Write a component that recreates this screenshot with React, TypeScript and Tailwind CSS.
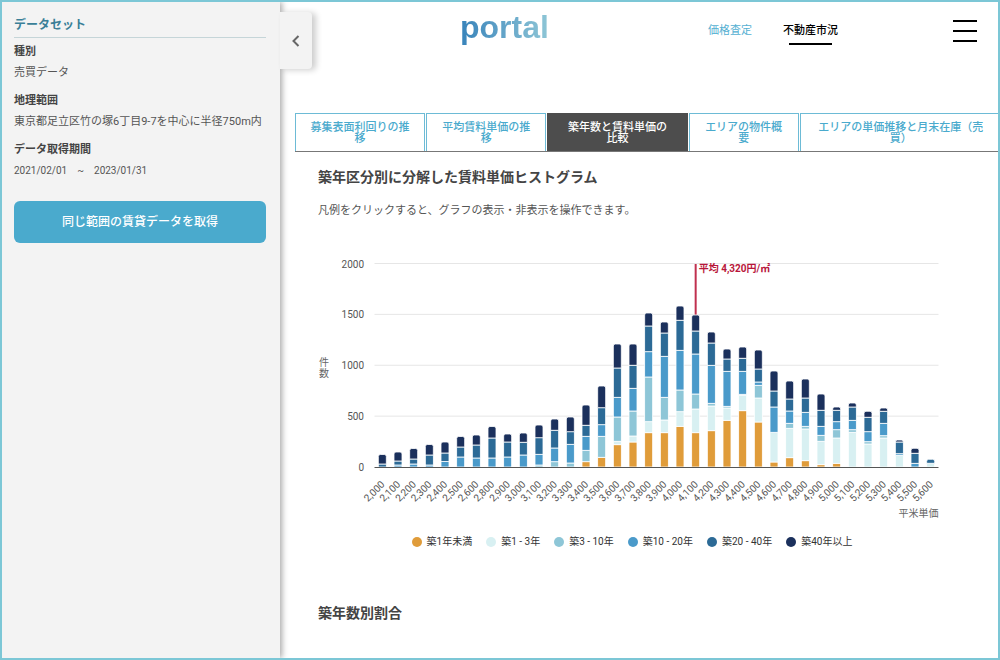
import { useState } from "react";

type Series = { name: string; color: string };

const SERIES: Series[] = [
  { name: "築1年未満", color: "#e09c3a" },
  { name: "築1 - 3年", color: "#d8f0f2" },
  { name: "築3 - 10年", color: "#8ec6d7" },
  { name: "築10 - 20年", color: "#4a9aca" },
  { name: "築20 - 40年", color: "#2c6a96" },
  { name: "築40年以上", color: "#1b305c" },
];

// Unit price and the cumulative top of each age band, in chart units above the baseline.
const BARS: [string, number[]][] = [
  ["2,000", [0, 0, 0, 0, 3, 12.5]],
  ["2,100", [0, 0, 0, 2, 6, 15]],
  ["2,200", [0, 0, 0, 3, 8, 18.5]],
  ["2,300", [0, 0, 0, 2, 12, 22.5]],
  ["2,400", [0, 0, 0, 5.5, 14, 25]],
  ["2,500", [0, 0, 0, 10, 20, 30.5]],
  ["2,600", [0, 0, 0, 9, 22, 32]],
  ["2,800", [0, 0, 0, 9, 29, 40.5]],
  ["2,900", [0, 0, 0, 10, 25, 33]],
  ["3,000", [0, 0, 0, 12, 24.7, 34]],
  ["3,100", [0, 0, 2, 12.7, 29.3, 42]],
  ["3,200", [0, 0, 5.3, 19, 36.7, 48]],
  ["3,300", [0, 0, 4, 22.7, 35.3, 50]],
  ["3,400", [5.3, 5.3, 16.7, 30.7, 41.7, 62]],
  ["3,500", [9.7, 9.7, 30.7, 42.3, 59.3, 81]],
  ["3,600", [22.3, 25.7, 50, 69.7, 99, 123]],
  ["3,700", [25, 31, 56, 78.7, 101.7, 123]],
  ["3,800", [34.3, 45.3, 90, 115.3, 141, 154]],
  ["3,900", [34.3, 47, 69.7, 110.7, 134, 145]],
  ["4,000", [40.7, 55.3, 77, 116.7, 146.7, 161]],
  ["4,100", [34.3, 58, 73, 113, 136, 152]],
  ["4,200", [36.3, 61, 63.7, 101.7, 124, 135]],
  ["4,300", [46.7, 59, 60.7, 95.7, 108, 118]],
  ["4,400", [56.3, 71.7, 72.7, 95.7, 108.7, 120]],
  ["4,500", [45, 69, 81.7, 85, 98, 117]],
  ["4,600", [5, 34.7, 34.7, 60, 76, 96]],
  ["4,700", [9.3, 38.7, 43.7, 56, 68, 86]],
  ["4,800", [6.3, 38, 40.7, 54.7, 69, 88]],
  ["4,900", [2.3, 25.7, 31.7, 40.7, 56.7, 73]],
  ["5,000", [3.7, 29, 37.3, 45.3, 56.7, 60]],
  ["5,100", [0, 34.7, 37.3, 46.7, 60, 64]],
  ["5,200", [0, 23, 25.3, 35.3, 49.7, 55.7]],
  ["5,300", [0, 29, 31.3, 43.7, 55.7, 59]],
  ["5,400", [0, 11.7, 11.7, 13.3, 25, 27]],
  ["5,500", [0, 0, 0, 3.7, 13.7, 18.7]],
  ["5,600", [0, 3.7, 3.7, 3.7, 7.7, 7.7]],
];

const TABS: string[][] = [
  ["募集表面利回りの推", "移"],
  ["平均賃料単価の推", "移"],
  ["築年数と賃料単価の", "比較"],
  ["エリアの物件概", "要"],
  ["エリアの単価推移と月末在庫（売", "買）"],
];

const CONDITIONS: [string, string][] = [
  ["種別", "売買データ"],
  ["地理範囲", "東京都足立区竹の塚6丁目9-7を中心に半径750m内"],
  ["データ取得期間", "2021/02/01　~　2023/01/31"],
];

const BASE = 211;
const LEFT = 56.5;
const RIGHT = 620.5;
const STEP = (RIGHT - LEFT) / BARS.length;
const AVERAGE_X = LEFT + STEP * 20.5;

function topRounded(x: number, y: number, w: number, h: number) {
  const r = Math.min(2, h);
  return `M${x} ${y + h}V${y + r}Q${x} ${y} ${x + r} ${y}H${x + w - r}Q${x + w} ${y} ${x + w} ${y + r}V${y + h}Z`;
}

function Bar({ index, tops, hidden }: { index: number; tops: number[]; hidden: boolean[] }) {
  const x = LEFT + STEP * (index + 0.5) - 4;
  const parts: { h: number; color: string }[] = [];
  tops.forEach((top, i) => {
    const h = top - (i ? tops[i - 1] : 0);
    if (h > 0 && !hidden[i]) parts.push({ h, color: SERIES[i].color });
  });
  let y = BASE;
  return (
    <g stroke="#ffffff" strokeWidth="0.8">
      {parts.map((p, i) => {
        y -= p.h;
        return i === parts.length - 1 ? (
          <path key={i} d={topRounded(x, y, 8, p.h)} fill={p.color} />
        ) : (
          <rect key={i} x={x} y={y} width="8" height={p.h} fill={p.color} />
        );
      })}
    </g>
  );
}

function Histogram({ hidden }: { hidden: boolean[] }) {
  return (
    <svg viewBox="0 0 628 268" className="block w-full" role="img" aria-label="賃料単価ヒストグラム">
      {[0, 500, 1000, 1500, 2000].map((v) => {
        const y = BASE - (v / 2000) * 203.5;
        return (
          <g key={v}>
            {v > 0 && <line x1={LEFT} x2={RIGHT} y1={y} y2={y} stroke="#e6e6e6" strokeWidth="1" />}
            <text x="46" y={y + 4} textAnchor="end" fontSize="10" fill="#555">
              {v}
            </text>
          </g>
        );
      })}
      <text x="6" y="110" textAnchor="middle" fontSize="10" fill="#666">件</text>
      <text x="6" y="121" textAnchor="middle" fontSize="10" fill="#666">数</text>
      <line x1={AVERAGE_X} x2={AVERAGE_X} y1="8" y2={BASE} stroke="#c0304f" strokeWidth="2" />
      {BARS.map(([label, tops], i) => (
        <Bar key={label} index={i} tops={tops} hidden={hidden} />
      ))}
      <line x1={LEFT} x2={RIGHT} y1={BASE + 0.5} y2={BASE + 0.5} stroke="#555" strokeWidth="1" />
      {BARS.map(([label], i) => (
        <text
          key={label}
          transform={`translate(${LEFT + STEP * (i + 0.5) + 3} 229) rotate(-45)`}
          textAnchor="end"
          fontSize="10"
          fill="#555"
        >
          {label}
        </text>
      ))}
      <text x={AVERAGE_X + 3} y="16" fontSize="10" fontWeight="700" fill="#b8163a">
        平均 4,320円/㎡
      </text>
      <text x={RIGHT} y="261" textAnchor="end" fontSize="10" fill="#666">
        平米単価
      </text>
    </svg>
  );
}

function Sidebar() {
  return (
    <aside className="relative z-10 w-[278px] shrink-0 bg-[#f3f3f3] pt-3 pr-[14px] pl-3 shadow-[2px_0_6px_rgba(0,0,0,0.35)]">
      <div>
        <h2 className="border-b border-[#c5d5d8] pt-px pb-[2px] text-[12px] leading-5 font-bold text-[#3a7f97]">
          データセット
        </h2>
        <dl className="mt-1 flex flex-col gap-2 text-[11px] whitespace-nowrap text-[#555]">
          {CONDITIONS.map(([term, value]) => (
            <div key={term}>
              <dt className="leading-5 font-bold text-[#444]">{term}</dt>
              <dd className={term === "データ取得期間" ? "text-[10px] leading-[21px]" : "leading-[21px]"}>{value}</dd>
            </div>
          ))}
        </dl>
      </div>
      <button
        type="button"
        className="mt-5 h-[42px] w-full rounded-md bg-[#4aaacd] text-[12px] font-medium text-white"
      >
        同じ範囲の賃貸データを取得
      </button>
      <button
        type="button"
        aria-label="サイドバーを閉じる"
        className="absolute top-[10px] left-full flex h-[57px] w-8 items-center justify-center rounded-r-sm bg-[#f3f3f3] shadow-[4px_1px_6px_rgba(0,0,0,0.2)]"
      >
        <svg width="8" height="12" viewBox="0 0 8 12" fill="none" stroke="#666" strokeWidth="2">
          <path d="M6.5 1L1.5 6l5 5" />
        </svg>
      </button>
    </aside>
  );
}

function Header() {
  return (
    <header className="flex h-[58px] items-center pr-[21px] pl-[180px]">
      <a
        href="#"
        className="mb-2 bg-linear-to-r from-[#3783ba] to-[#8ec6d6] bg-clip-text font-['Liberation_Sans',sans-serif] text-[32px] leading-10 font-bold text-transparent"
      >
        portal
      </a>
      <nav className="mr-[115px] ml-auto flex gap-[31px] text-[11px] leading-5">
        <a href="#" className="text-[#55b0d2]">
          価格査定
        </a>
        <a href="#" aria-current="page" className="relative font-medium text-black">
          不動産市況
          <span className="absolute inset-x-[6px] top-[22px] h-[2px] bg-black" />
        </a>
      </nav>
      <button type="button" aria-label="メニュー" className="flex w-6 flex-col gap-2">
        <span className="h-[2px] bg-black" />
        <span className="h-[2px] bg-black" />
        <span className="h-[2px] bg-black" />
      </button>
    </header>
  );
}

export default function App() {
  const [active, setActive] = useState(2);
  const [hidden, setHidden] = useState<boolean[]>(SERIES.map(() => false));

  return (
    <div
      lang="ja"
      className="flex h-screen overflow-hidden border-2 border-[#7cc7d6] bg-white font-[Roboto,'Noto_Sans_CJK_JP',sans-serif] text-[#444]"
    >
      <Sidebar />
      <main className="min-w-0 flex-1">
        <Header />
        <div
          role="tablist"
          className="mt-[53px] -mr-1 ml-[15px] grid grid-cols-[130fr_120fr_140fr_110fr_202fr] gap-x-px border-b border-[#777]"
        >
          {TABS.map((lines, i) => (
            <button
              key={lines[0]}
              type="button"
              role="tab"
              aria-selected={active === i}
              onClick={() => setActive(i)}
              className={
                active === i
                  ? "h-[38px] border border-b-0 border-[#4d4d4d] bg-[#4d4d4d] text-[11px] leading-[11px] font-medium whitespace-nowrap text-white"
                  : "h-[38px] border border-b-0 border-[#6dbbd6] bg-white text-[11px] leading-[11px] font-medium whitespace-nowrap text-[#4aaacd]"
              }
            >
              {lines[0]}
              <br />
              {lines[1]}
            </button>
          ))}
        </div>
        <section className="pr-[52px] pl-[38px]">
          <h2 className="mt-[15px] text-[14px] leading-5 font-bold">築年区分別に分解した賃料単価ヒストグラム</h2>
          <p className="mt-[14px] text-[11px] leading-5 text-[#555]">
            凡例をクリックすると、グラフの表示・非表示を操作できます。
          </p>
          <div className="mt-[35px]">
            <Histogram hidden={hidden} />
          </div>
          <div className="mt-2 flex justify-center gap-[14px]">
            {SERIES.map((s, i) => (
              <button
                key={s.name}
                type="button"
                aria-pressed={!hidden[i]}
                onClick={() => setHidden(hidden.map((h, j) => (j === i ? !h : h)))}
                className="flex items-center gap-[5px] text-[10px] leading-5 whitespace-nowrap text-[#333]"
              >
                <span
                  className="size-[10px] rounded-full"
                  style={{ backgroundColor: s.color, opacity: hidden[i] ? 0.3 : 1 }}
                />
                {s.name}
              </button>
            ))}
          </div>
          <h2 className="mt-[51px] text-[14px] leading-5 font-bold">築年数別割合</h2>
        </section>
      </main>
    </div>
  );
}
